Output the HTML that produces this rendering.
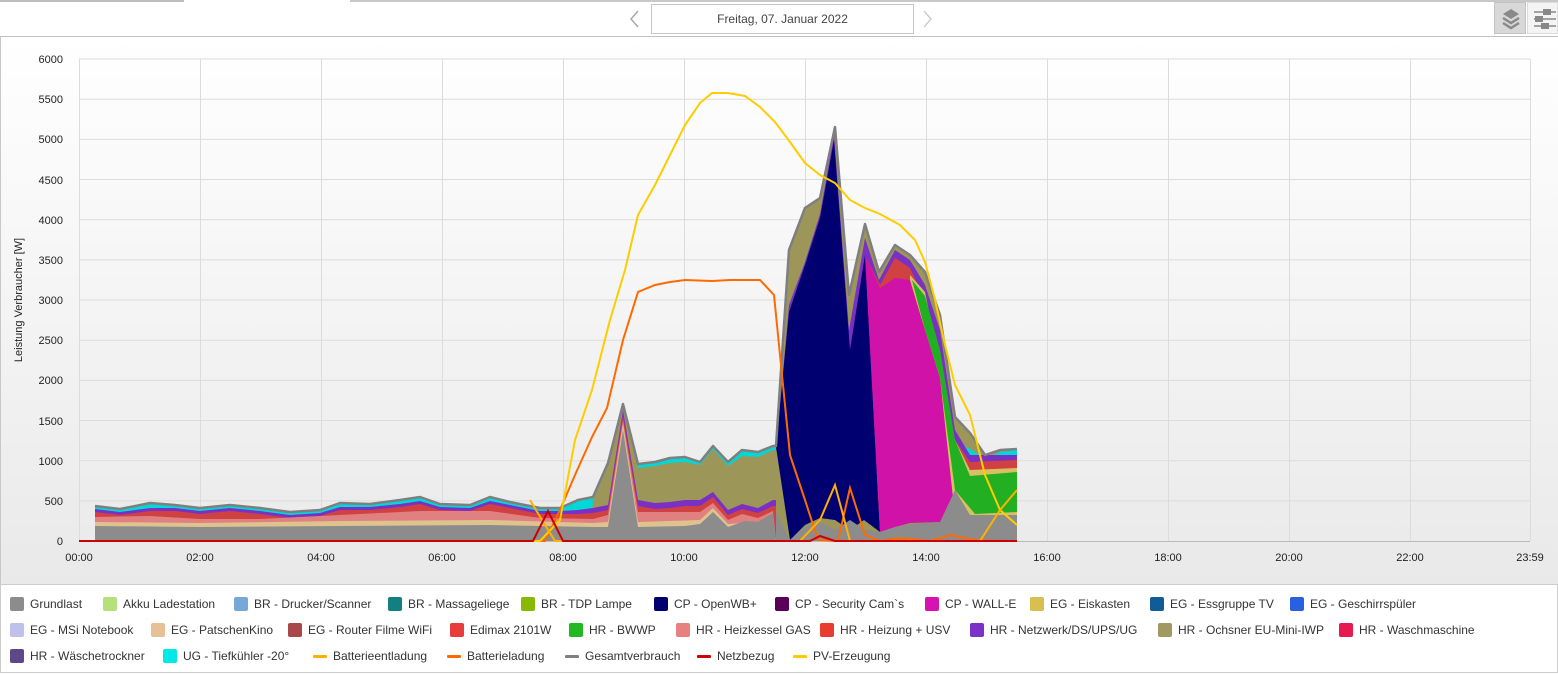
<!DOCTYPE html>
<html><head><meta charset="utf-8"><style>
*{margin:0;padding:0;box-sizing:border-box}
body{width:1558px;height:674px;overflow:hidden;background:#fff;font-family:"Liberation Sans",sans-serif;position:relative}
.a{position:absolute}
.li{position:absolute;font-size:12px;color:#333;white-space:nowrap;line-height:14px}
.li i{display:inline-block;width:14px;height:14px;border-radius:2px;vertical-align:top;margin-right:6px}
.li b{display:inline-block;width:14px;height:3px;border-radius:1px;vertical-align:top;margin:6px 6px 0 0}
</style></head><body>
<div class="a" style="left:0;top:0;width:184px;height:2px;background:#bdbdbd"></div>
<div class="a" style="left:350px;top:0;width:1208px;height:2px;background:#c8c8c8"></div>
<div class="a" style="left:651px;top:4px;width:263px;height:30px;border:1px solid #c6c6c6;background:#fff;font-size:12px;color:#444;text-align:center;line-height:28px">Freitag, 07. Januar 2022</div>
<svg class="a" style="left:628px;top:10px" width="12" height="18"><path d="M10 1 L3 9 L10 17" fill="none" stroke="#aaa" stroke-width="1.5"/></svg>
<svg class="a" style="left:922px;top:10px" width="12" height="18"><path d="M2 1 L9 9 L2 17" fill="none" stroke="#ccc" stroke-width="1.5"/></svg>
<div class="a" style="left:1494px;top:2px;width:32px;height:32px;background:#d8d8d8;border:1px solid #c4c4c4"></div>
<svg class="a" style="left:1500px;top:7px" width="22" height="24"><path d="M11 2 L19 7 L11 12 L3 7Z" fill="#8a8a8a"/><path d="M3 11 L11 16 L19 11" fill="none" stroke="#8a8a8a" stroke-width="2.5"/><path d="M3 16 L11 21 L19 16" fill="none" stroke="#8a8a8a" stroke-width="2.5"/></svg>
<div class="a" style="left:1527px;top:2px;width:31px;height:32px;background:#f4f4f4;border:1px solid #ddd"></div>
<svg class="a" style="left:1530px;top:5px" width="28" height="26"><path d="M4 7H26M4 14H26M4 21H26" stroke="#888" stroke-width="1.5"/><rect x="13" y="4" width="8" height="6" fill="#888"/><rect x="5" y="11" width="8" height="6" fill="#888"/><rect x="11" y="18" width="8" height="6" fill="#888"/></svg>
<div class="a" style="left:0;top:36px;width:1558px;height:549px;border-top:1px solid #c0c0c0;border-left:1px solid #c8c8c8;border-bottom:1px solid #ccc;background:linear-gradient(#fff,#e9e9e9)"></div>
<svg class="a" style="left:0;top:0" width="1558" height="584" font-family="Liberation Sans, sans-serif">
<g stroke="#dcdcdc" stroke-width="1">
<path d="M79 59H1530M79 99.2H1530M79 139.4H1530M79 179.5H1530M79 219.7H1530M79 259.9H1530M79 300H1530M79 340.2H1530M79 380.4H1530M79 420.5H1530M79 460.7H1530M79 500.9H1530"/>
<path d="M79.5 59V541M200.5 59V541M321.5 59V541M442.5 59V541M563.5 59V541M684.5 59V541M805.5 59V541M926.5 59V541M1047.5 59V541M1168.5 59V541M1289.5 59V541M1410.5 59V541M1530.5 59V541"/>
</g>
<path d="M79 541.5H1530" stroke="#bbb"/>
<g font-size="11" fill="#222" text-anchor="end">
<text x="63" y="63">6000</text><text x="63" y="103">5500</text><text x="63" y="143">5000</text><text x="63" y="184">4500</text><text x="63" y="224">4000</text><text x="63" y="264">3500</text><text x="63" y="304">3000</text><text x="63" y="344">2500</text><text x="63" y="384">2000</text><text x="63" y="425">1500</text><text x="63" y="465">1000</text><text x="63" y="505">500</text><text x="63" y="545">0</text>
</g>
<g font-size="11" fill="#222" text-anchor="middle">
<text x="79" y="561">00:00</text><text x="200" y="561">02:00</text><text x="321" y="561">04:00</text><text x="442" y="561">06:00</text><text x="563" y="561">08:00</text><text x="684" y="561">10:00</text><text x="805" y="561">12:00</text><text x="926" y="561">14:00</text><text x="1047" y="561">16:00</text><text x="1168" y="561">18:00</text><text x="1289" y="561">20:00</text><text x="1410" y="561">22:00</text><text x="1530" y="561">23:59</text>
</g>
<text transform="translate(22,300) rotate(-90)" font-size="11" fill="#222" text-anchor="middle">Leistung Verbraucher [W]</text>
<polygon fill="#00d8d8" points="95,506 120,509 150,503 175,505 200,508 230,505 260,508 290,512 320,510 340,503 370,504 400,500 420,497 440,504 470,505 490,497 510,502 540,508 560,508 578,500 593,497 608,463 623,404 638,464 655,462 670,458 685,457 700,462 713,446 728,462 742,450 758,452 773,446 776,446 776,541 95,541"/>
<polygon fill="#9c9758" points="590,541 593,500 608,466 623,407 638,468 655,466 670,463 685,462 700,465 713,449 728,466 742,456 758,457 773,450 776,450 776,541"/>
<polygon fill="#7b30c4" points="95,509 120,512 150,508 175,508 200,511 230,508 260,511 290,515 320,513 340,507 370,507 400,504 420,501 440,507 470,508 490,501 510,505 540,511 560,511 578,510 593,508 608,505 623,410 638,500 655,503 670,502 685,500 700,500 713,492 728,510 742,504 758,508 773,500 776,500 776,541 95,541"/>
<polygon fill="#d04242" points="95,512 120,515 150,511 175,511 200,514 230,511 260,514 290,518 320,516 340,510 370,510 400,507 420,504 440,510 470,511 490,504 510,508 540,514 560,514 578,514 593,513 608,510 623,416 638,506 655,509 670,508 685,506 700,506 713,497 728,515 742,509 758,513 773,506 776,506 776,541 95,541"/>
<polygon fill="#e08080" points="95,517 150,516 200,519 260,519 340,515 420,511 490,511 540,518 593,519 608,515 623,420 638,512 700,512 713,503 728,520 742,514 758,518 773,511 776,541 95,541"/>
<polygon fill="#dfc38f" points="95,522 200,523 340,521 490,520 593,523 608,522 623,424 638,522 700,520 713,508 728,524 758,522 773,515 776,541 95,541"/>
<polygon fill="#8c8c8c" points="95,526 200,527 340,526 490,525 593,527 608,527 623,430 638,527 685,526 700,524 713,512 728,527 745,521 758,522 773,513 776,541 95,541"/>
<polygon fill="#9c9758" points="776,446 789,250 805,208 820,198 835,127 849,295 865,224 879,272 895,245 910,255 925,272 940,315 955,417 970,433 985,455 1000,450 1017,449 1017,541 776,541"/>
<polygon fill="#00d8d8" points="955,440 985,458 1000,452 1017,450 1017,470 955,470"/>
<polygon fill="#7b30c4" points="776,450 789,305 805,262 820,214 834,134 849,330 865,238 879,280 895,250 910,260 925,285 940,330 955,430 970,455 1017,455 1017,500 955,500"/>
<polygon fill="#d04242" points="865,255 880,285 895,258 910,268 925,300 955,440 970,462 1017,460 1017,470 955,470"/>
<polygon fill="#000070" points="776,447 789,312 805,265 820,218 834,140 850,350 865,255 880,532 864,520 850,530 835,520 820,518 805,525 790,540"/>
<polygon fill="#d012a8" points="865,255 880,288 895,278 910,280 925,330 940,378 955,515 940,522 910,523 895,527 880,532"/>
<polygon fill="#d8c060" points="910,275 925,292 955,440 970,470 1017,468 1017,516 955,516 940,378 925,330 910,280"/>
<polygon fill="#22b022" points="912,280 925,296 940,350 955,440 970,476 1017,472 1017,512 975,514 955,490 940,378 925,330"/>
<polygon fill="#8c8c8c" points="776,512 790,540 805,527 820,522 835,530 850,520 865,530 880,532 895,527 910,524 940,522 955,490 970,515 1017,515 1017,541 776,541"/>
<polyline fill="none" stroke="#7f7f7f" stroke-width="2.5" stroke-linejoin="round" points="95,506 120,509 150,503 175,505 200,508 230,505 260,508 290,512 320,510 340,503 370,504 400,500 420,497 440,504 470,505 490,497 510,502 540,508 560,508 578,500 593,497 608,463 623,404 638,464 655,462 670,458 685,457 700,462 713,446 728,462 742,450 758,452 773,446 776,446 789,250 805,208 820,198 835,127 849,295 865,224 879,272 895,245 910,255 925,272 940,315 955,417 970,433 985,455 1000,450 1017,449"/>
<polyline fill="none" stroke="#ff6a00" stroke-width="2" points="79,541 545,541 560,510 575,475 592,437 607,408 623,340 638,292 655,285 670,282 685,280 712,281 730,280 760,280 774,295 790,455 805,500 818,540 838,541 850,488 865,535 880,541 900,538 930,541 950,535 975,540 1000,541"/>
<polyline fill="none" stroke="#ffcc00" stroke-width="2" points="79,541 540,541 560,520 575,440 592,390 610,320 625,270 638,215 655,185 670,155 685,125 700,103 712,93 728,93 745,96 760,107 775,122 790,142 805,163 820,175 835,183 850,200 865,208 880,214 900,225 915,240 925,262 935,300 945,345 955,385 970,415 985,475 1000,510 1017,525"/>
<polyline fill="none" stroke="#ffb000" stroke-width="2" points="530,500 545,525 555,541 800,541 820,520 835,485 850,541 980,541 1000,510 1017,490"/>
<polyline fill="none" stroke="#cc0000" stroke-width="2" points="79,541 533,541 548,511 563,541 810,541 820,536 835,541 1017,541"/>
</svg>
<div class="a" style="left:0;top:584px;width:1558px;height:89px;border:1px solid #ccc;background:#fff"></div>
<div class="li" style="left:10px;top:597px"><i style="background:#8c8c8c"></i>Grundlast</div>
<div class="li" style="left:103px;top:597px"><i style="background:#b5e07a"></i>Akku Ladestation</div>
<div class="li" style="left:234px;top:597px"><i style="background:#78a8d8"></i>BR - Drucker/Scanner</div>
<div class="li" style="left:388px;top:597px"><i style="background:#128080"></i>BR - Massageliege</div>
<div class="li" style="left:521px;top:597px"><i style="background:#88b800"></i>BR - TDP Lampe</div>
<div class="li" style="left:654px;top:597px"><i style="background:#000070"></i>CP - OpenWB+</div>
<div class="li" style="left:775px;top:597px"><i style="background:#5a0058"></i>CP - Security Cam`s</div>
<div class="li" style="left:925px;top:597px"><i style="background:#d812b0"></i>CP - WALL-E</div>
<div class="li" style="left:1030px;top:597px"><i style="background:#d8c050"></i>EG - Eiskasten</div>
<div class="li" style="left:1150px;top:597px"><i style="background:#105c98"></i>EG - Essgruppe TV</div>
<div class="li" style="left:1290px;top:597px"><i style="background:#2860e0"></i>EG - Geschirrspüler</div>
<div class="li" style="left:10px;top:623px"><i style="background:#c0c0ec"></i>EG - MSi Notebook</div>
<div class="li" style="left:151px;top:623px"><i style="background:#e8c098"></i>EG - PatschenKino</div>
<div class="li" style="left:288px;top:623px"><i style="background:#a84848"></i>EG - Router Filme WiFi</div>
<div class="li" style="left:450px;top:623px"><i style="background:#e83c3c"></i>Edimax 2101W</div>
<div class="li" style="left:569px;top:623px"><i style="background:#22b822"></i>HR - BWWP</div>
<div class="li" style="left:676px;top:623px"><i style="background:#e88080"></i>HR - Heizkessel GAS</div>
<div class="li" style="left:820px;top:623px"><i style="background:#e83c30"></i>HR - Heizung + USV</div>
<div class="li" style="left:970px;top:623px"><i style="background:#7b30c8"></i>HR - Netzwerk/DS/UPS/UG</div>
<div class="li" style="left:1158px;top:623px"><i style="background:#a09a60"></i>HR - Ochsner EU-Mini-IWP</div>
<div class="li" style="left:1339px;top:623px"><i style="background:#e81850"></i>HR - Waschmaschine</div>
<div class="li" style="left:10px;top:649px"><i style="background:#604888"></i>HR - Wäschetrockner</div>
<div class="li" style="left:163px;top:649px"><i style="background:#00e8e8"></i>UG - Tiefkühler -20°</div>
<div class="li" style="left:313px;top:649px"><b style="background:#ffb000"></b>Batterieentladung</div>
<div class="li" style="left:447px;top:649px"><b style="background:#ff6a00"></b>Batterieladung</div>
<div class="li" style="left:565px;top:649px"><b style="background:#808080"></b>Gesamtverbrauch</div>
<div class="li" style="left:697px;top:649px"><b style="background:#cc0000"></b>Netzbezug</div>
<div class="li" style="left:793px;top:649px"><b style="background:#ffcc00"></b>PV-Erzeugung</div>
</body></html>
